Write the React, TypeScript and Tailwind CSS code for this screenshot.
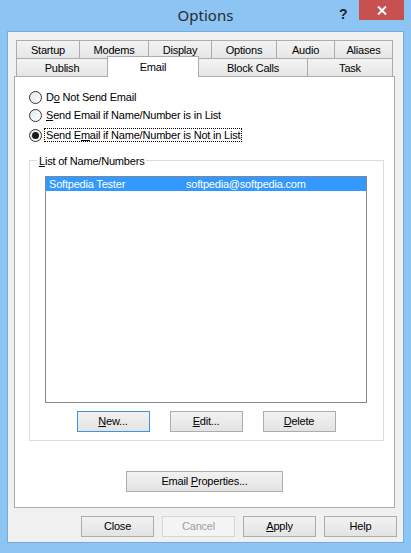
import type { ReactNode } from 'react';

function Button({ width, children, focused, disabled }: { width: string; children: ReactNode; focused?: boolean; disabled?: boolean }) {
  const look = disabled
    ? 'border-[#d5d5d5] bg-[#f4f4f4] text-[#a0a0a0]'
    : `${focused ? 'border-[#3c94e6]' : 'border-[#acacac]'} bg-gradient-to-b from-[#f2f2f2] to-[#e3e3e3] text-black`;
  return <div className={`h-[21px] flex items-center justify-center border text-[11px] ${width} ${look}`}>{children}</div>;
}

function Tab({ width, children, last, noLeft }: { width: string; children: ReactNode; last?: boolean; noLeft?: boolean }) {
  return (
    <div
      className={`h-[18px] ${width} flex items-center justify-center border-t border-[#acacac] ${noLeft ? '' : 'border-l'} ${
        last ? 'border-r' : ''
      } bg-gradient-to-b from-[#f3f3f3] to-[#e6e6e6] text-[11px] pt-[1px]`}
    >
      {children}
    </div>
  );
}

function Radio({ checked, focused, children }: { checked?: boolean; focused?: boolean; children: ReactNode }) {
  return (
    <div className="flex items-center h-[14px]">
      <div className="w-[13px] h-[13px] rounded-full border border-[#333] bg-gradient-to-br from-[#e6e6e6] to-white flex items-center justify-center">
        {checked && <div className="w-[7px] h-[7px] rounded-full bg-[#1a1a1a]" />}
      </div>
      <span
        className={`ml-[2px] px-[1px] leading-[12px] border ${focused ? 'border-dotted border-black' : 'border-transparent'}`}
      >
        {children}
      </span>
    </div>
  );
}

export default function App() {
  return (
    <div
      className="w-[411px] h-[553px] bg-[#8cc4f4] flex flex-col text-black tracking-[-0.2px]"
      style={{ fontFamily: '"Liberation Sans", Arial, sans-serif' }}
    >
      {/* Title bar */}
      <div className="relative h-[31px] flex items-center justify-center">
        <span className="text-[15px] text-[#2b2b2b] tracking-normal" style={{ fontFamily: '"Noto Sans", "Liberation Sans", sans-serif' }}>
          Options
        </span>
        <span className="absolute left-[339px] top-[4px] text-[14px] font-bold text-[#222]">?</span>
        <div className="absolute right-[7px] top-0 w-[45px] h-[20px] bg-[#c75050] flex items-center justify-center">
          <svg width="10" height="9" viewBox="0 0 10 9">
            <path d="M1 0.5 L9 8.5 M9 0.5 L1 8.5" stroke="white" strokeWidth="2" />
          </svg>
        </div>
      </div>

      {/* Client area */}
      <div className="mx-[7px] h-[512px] border border-[#74aadc] bg-[#f0f0f0] px-[6px] pt-[8px] text-[11px]">
        {/* Tabs */}
        <div className="ml-[2px] flex">
          <Tab width="w-[63px]">Startup</Tab>
          <Tab width="w-[69px]">Modems</Tab>
          <Tab width="w-[63px]">Display</Tab>
          <Tab width="w-[65px]">Options</Tab>
          <Tab width="w-[58px]">Audio</Tab>
          <Tab width="w-[59px]" last>
            Aliases
          </Tab>
        </div>
        <div className="ml-[2px] flex items-start h-[18px]">
          <Tab width="w-[91px]">Publish</Tab>
          <div className="relative z-10 -mt-[2px] h-[21px] w-[92px] bg-white border-t border-l border-r border-[#acacac] flex justify-center pt-[2px]">
            Email
          </div>
          <Tab width="w-[108px]" noLeft>
            Block Calls
          </Tab>
          <Tab width="w-[86px]" last>
            Task
          </Tab>
        </div>

        {/* Panel */}
        <div className="w-[381px] h-[432px] bg-white border border-[#acacac] pl-[14px] pt-[13px]">
          <Radio>
            D<u>o</u> Not Send Email
          </Radio>
          <div className="mt-[4px]">
            <Radio>
              <u>S</u>end Email if Name/Number is in List
            </Radio>
          </div>
          <div className="mt-[6px]">
            <Radio checked focused>
              Send E<u>m</u>ail if Name/Number is Not in List
            </Radio>
          </div>

          {/* Group box */}
          <div className="relative mt-[18px] w-[355px] border border-[#dcdcdc] pt-[15px] pb-[8px] pl-[15px]">
            <span className="absolute -top-[8px] left-[7px] bg-white px-[2px]">
              <u>L</u>ist of Name/Numbers
            </span>
            <div className="w-[322px] h-[227px] border border-[#828790] bg-white">
              <div className="h-[14px] bg-[#3399ff] text-white flex items-center">
                <span className="pl-[3px] w-[140px]">Softpedia Tester</span>
                <span>softpedia@softpedia.com</span>
              </div>
            </div>
            <div className="mt-[8px] -ml-[16px] flex justify-center gap-[20px]">
              <Button width="w-[73px]" focused>
                <span>
                  <u>N</u>ew...
                </span>
              </Button>
              <Button width="w-[73px]">
                <span>
                  <u>E</u>dit...
                </span>
              </Button>
              <Button width="w-[73px]">
                <span>
                  <u>D</u>elete
                </span>
              </Button>
            </div>
          </div>

          <div className="mt-[30px] -ml-[14px] flex justify-center">
            <Button width="w-[157px]">
              <span>
                Email <u>P</u>roperties...
              </span>
            </Button>
          </div>
        </div>

        {/* Dialog buttons */}
        <div className="mt-[8px] flex justify-end gap-[8px]">
          <Button width="w-[73px]">Close</Button>
          <Button width="w-[73px]" disabled>
            Cancel
          </Button>
          <Button width="w-[73px]">
            <span>
              <u>A</u>pply
            </span>
          </Button>
          <Button width="w-[73px]">Help</Button>
        </div>
      </div>
    </div>
  );
}
